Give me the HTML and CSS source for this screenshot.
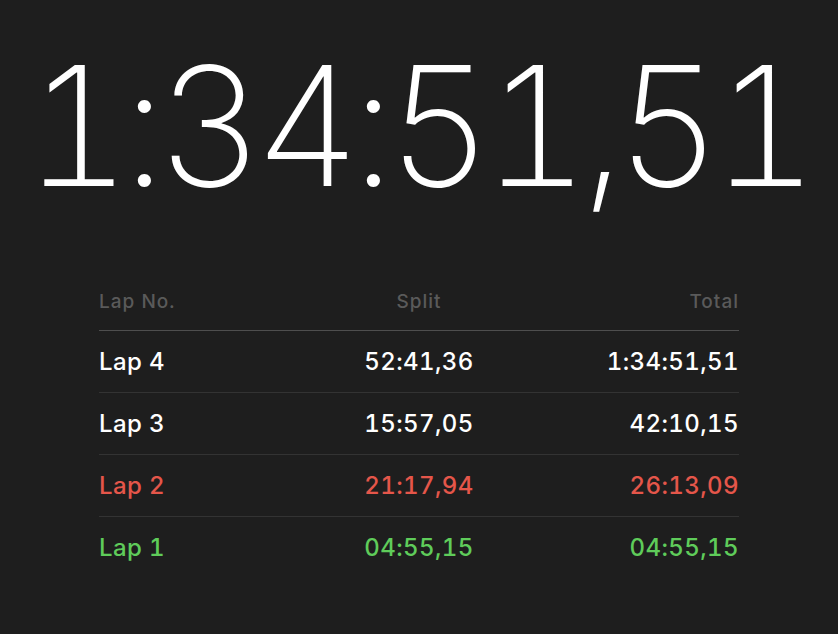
FILE: index.html
```html
<!DOCTYPE html>
<html>
<head>
<meta charset="utf-8">
<link rel="stylesheet" href="styles.css">
</head>
<body>
<main class="app">
  <div class="clock">1:34:51,51</div>
  <section class="laps">
    <div class="row head">
      <span class="c1">Lap No.</span>
      <span class="c2">Split</span>
      <span class="c3">Total</span>
    </div>
    <div class="row">
      <span class="c1">Lap 4</span>
      <span class="c2">52:41,36</span>
      <span class="c3">1:34:51,51</span>
    </div>
    <div class="row">
      <span class="c1">Lap 3</span>
      <span class="c2">15:57,05</span>
      <span class="c3">42:10,15</span>
    </div>
    <div class="row slow">
      <span class="c1">Lap 2</span>
      <span class="c2">21:17,94</span>
      <span class="c3">26:13,09</span>
    </div>
    <div class="row fast">
      <span class="c1">Lap 1</span>
      <span class="c2">04:55,15</span>
      <span class="c3">04:55,15</span>
    </div>
  </section>
</main>
</body>
</html>
```
FILE: styles.css
```css
html, body {
  margin: 0;
  padding: 0;
  background: #1e1e1e;
  height: 100%;
}
body {
  font-family: Inter, "Liberation Sans", sans-serif;
  color: #ffffff;
}
.app {
  display: flex;
  flex-direction: column;
  align-items: center;
  padding-top: 26px;
}
.clock {
  font-size: 166px;
  font-weight: 200;
  line-height: 200px;
  letter-spacing: -10px;
  padding-right: 4px;
  font-variant-numeric: tabular-nums;
  white-space: nowrap;
}
.laps {
  width: 640px;
  margin-top: 64px;
  display: flex;
  flex-direction: column;
}
.row {
  display: grid;
  grid-template-columns: 1fr 1fr 1fr;
  align-items: center;
  height: 61px;
  border-bottom: 1px solid #333333;
  font-size: 24px;
  font-weight: 500;
  letter-spacing: 0.4px;
  font-variant-numeric: tabular-nums;
}
.row:last-child { border-bottom: none; }
.row.head {
  height: 40px;
  align-items: start;
  font-size: 19px;
  letter-spacing: 1px;
  color: #5a5a5a;
  border-bottom-color: #4e4e4e;
}
.c1 { text-align: left; }
.c2 { text-align: center; }
.c3 { text-align: right; }
.slow { color: #e5564a; }
.fast { color: #5fcc5a; }
```
